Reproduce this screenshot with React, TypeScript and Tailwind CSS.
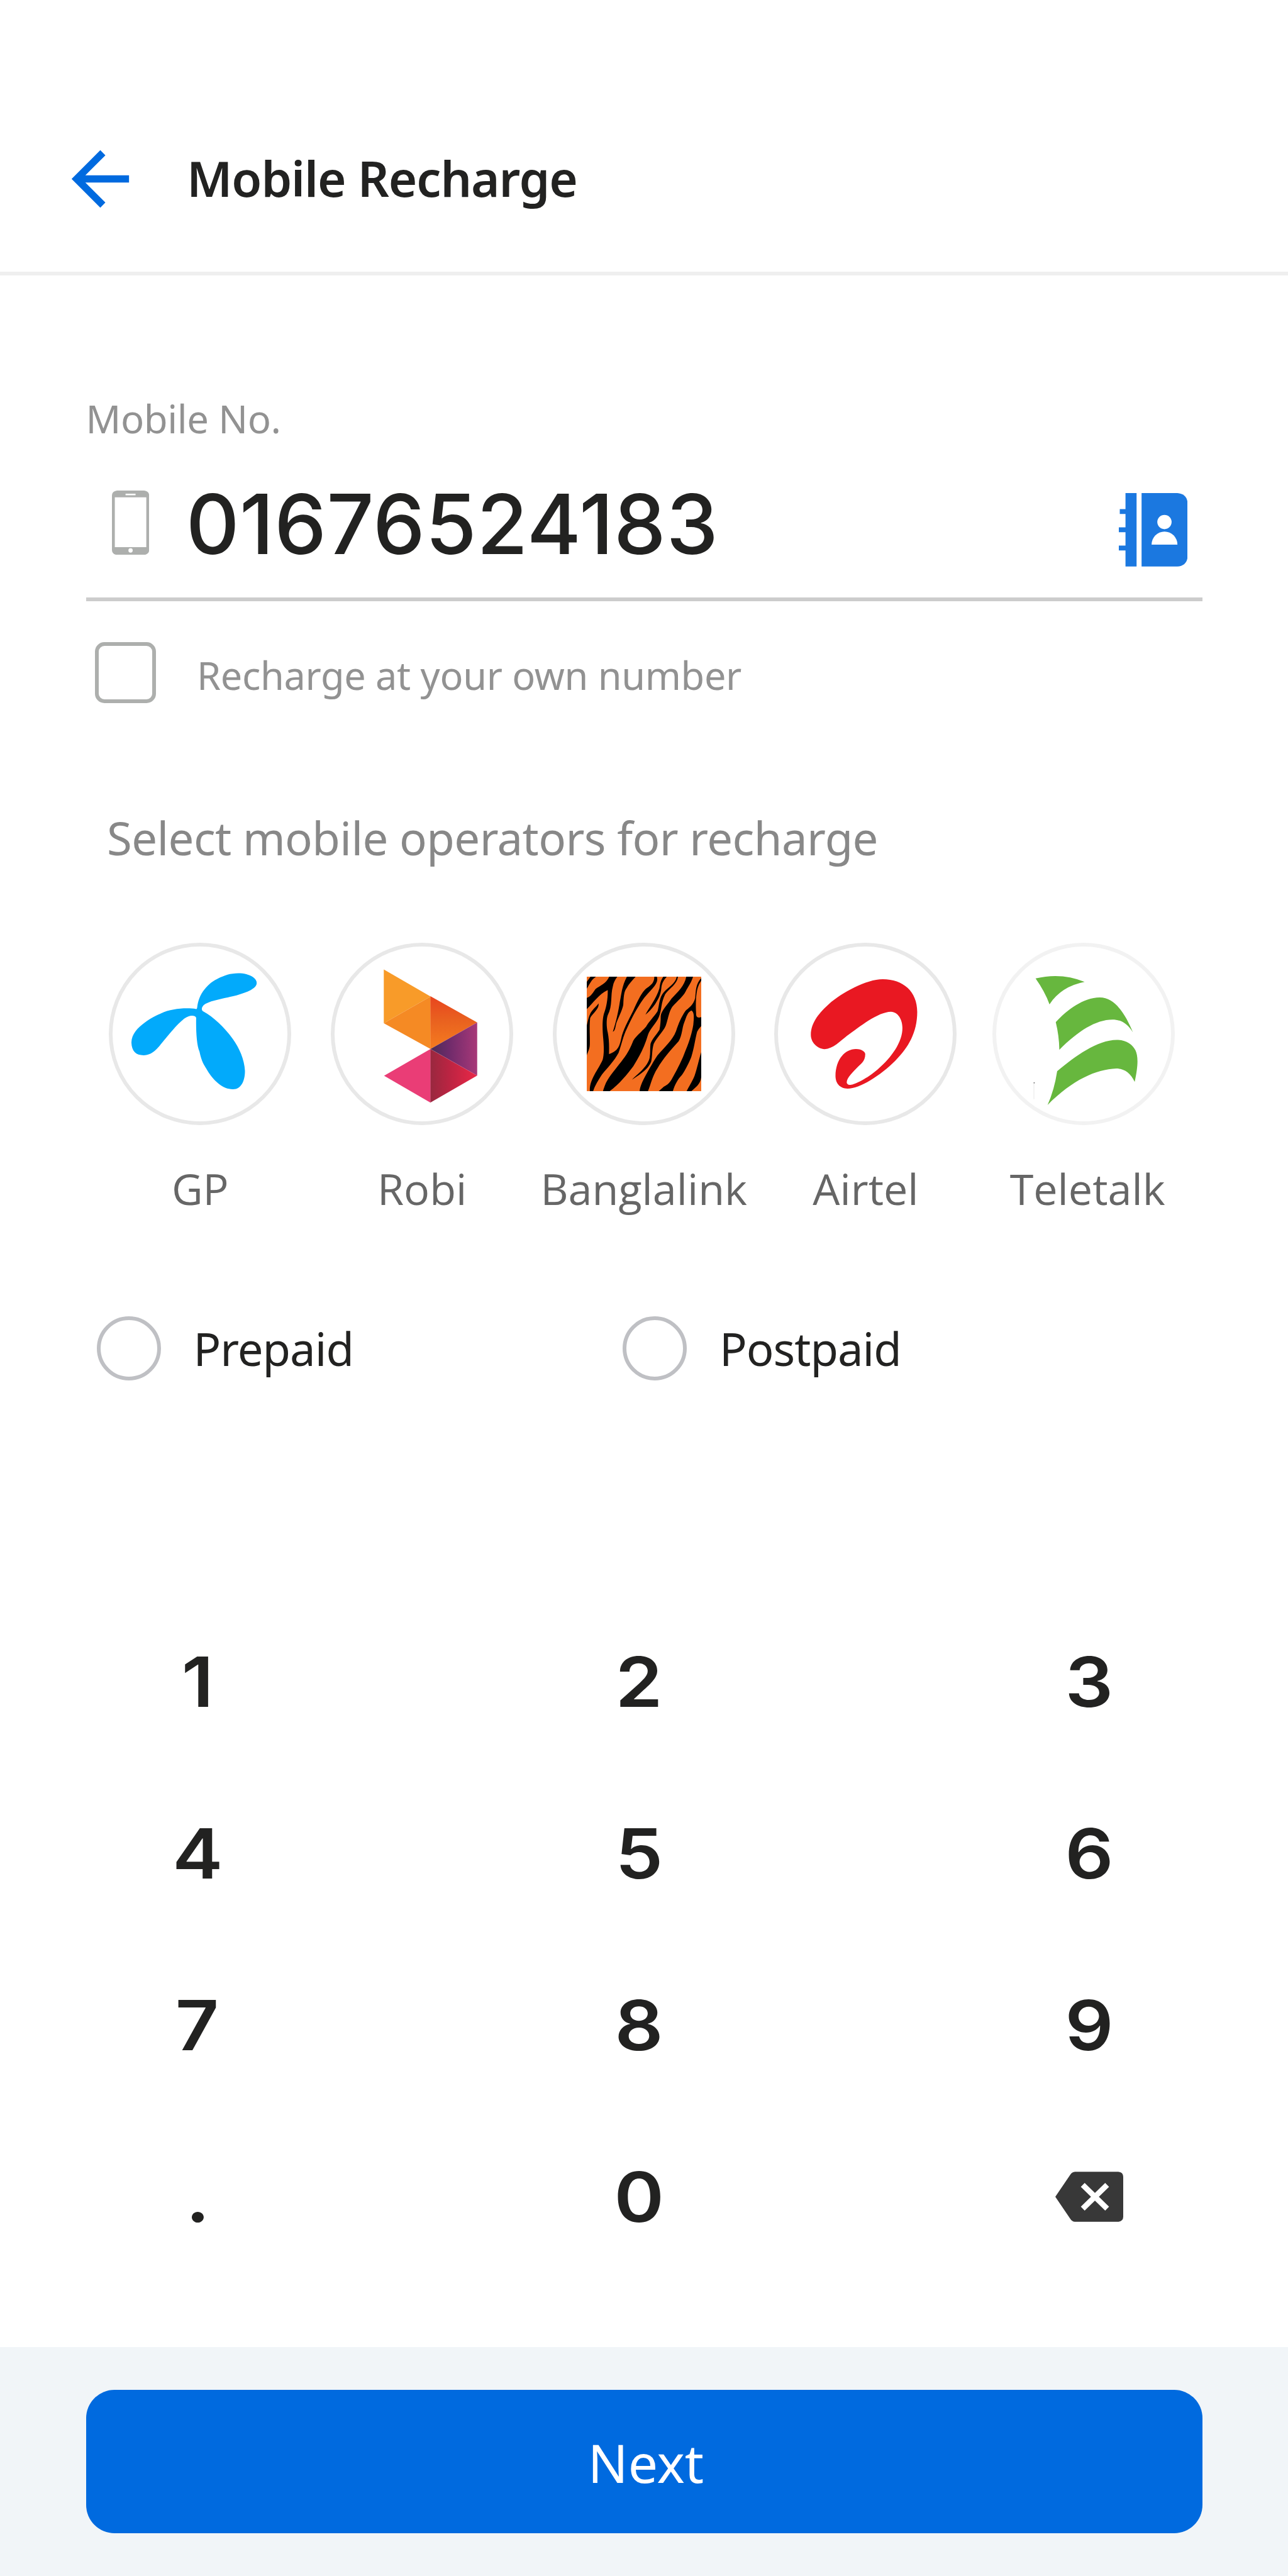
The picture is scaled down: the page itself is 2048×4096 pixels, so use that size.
import React from 'react';

const GpLogo = () => (
  <svg viewBox="70 98 1428 1428" className="h-full w-full">
    <path
      fill="#02aafb"
      d="M755 617C680 605 560 612 480 651C420 675 375 705 345 728C300 762 248 810 247 880C250 950 283 980 345 979C400 975 430 950 480 890C540 820 600 740 660 693C700 662 745 664 754 685C752 790 758 900 780 950C800 1040 815 1050 840 1095C890 1180 965 1245 1040 1245C1105 1248 1137 1180 1136 1100C1132 1010 1090 920 1040 850C970 755 890 680 806 634C790 620 798 585 845 568C880 552 920 545 960 535C1020 520 1060 515 1100 500C1140 488 1175 475 1205 452C1235 432 1238 395 1200 368C1150 330 1060 330 1000 348C940 368 910 385 880 404C850 425 835 445 820 462C785 505 767 555 762 605Q760 618 755 617Z"
    />
  </svg>
);

const RobiLogo = () => (
  <svg viewBox="70 98 1428 1428" className="h-full w-full">
    <defs>
      <linearGradient id="robi-top" x1="0" y1="0" x2="0" y2="1">
        <stop offset="0" stopColor="#e8451f" />
        <stop offset="0.45" stopColor="#e9611f" />
        <stop offset="1" stopColor="#f57c20" />
      </linearGradient>
      <linearGradient id="robi-side" x1="0" y1="0" x2="1" y2="0">
        <stop offset="0" stopColor="#4a2c55" />
        <stop offset="0.4" stopColor="#6f2b6b" />
        <stop offset="1" stopColor="#a83878" />
      </linearGradient>
      <linearGradient id="robi-base" x1="0" y1="0" x2="1" y2="0">
        <stop offset="0" stopColor="#98283f" />
        <stop offset="0.4" stopColor="#bb2442" />
        <stop offset="1" stopColor="#ea2747" />
      </linearGradient>
    </defs>
    <path fill="#f89b29" d="M485 307L851 519L485 728Z" />
    <path fill="#f58a24" d="M485 728L851 519V930Z" />
    <path fill="url(#robi-top)" d="M850 517L1216 722L850 930Z" />
    <path fill="url(#robi-side)" d="M850 930L1216 722V1138Z" />
    <path fill="url(#robi-base)" d="M849 930L1216 1138L849 1350Z" />
    <path fill="#ea3d76" d="M850 930V1350L487 1140Z" />
  </svg>
);

const BanglalinkLogo = () => (
  <svg viewBox="70 98 1428 1428" className="h-full w-full">
    <rect x="336" y="364" width="896" height="896" fill="#f36e20" />
    <g fill="#000">
      <path d="M365 364L408 364C375 385 365 410 336 458L336 405Z" />
      <path d="M512 364C490 415 440 435 405 460C385 485 375 515 336 530L336 618C390 565 430 500 500 468C502 530 490 600 475 640C455 690 458 780 465 850C472 930 470 980 460 1015C425 1095 355 1170 360 1260L386 1260C400 1215 430 1170 455 1130C500 1075 550 1025 585 960C610 890 620 830 650 770C690 680 740 590 785 530C825 480 888 430 888 385L885 364L865 364C865 410 840 430 810 450C770 475 730 560 700 630C660 710 620 780 605 850C590 920 575 945 510 970C512 900 510 850 500 800C490 760 488 700 500 665C540 590 520 510 540 440C545 410 560 385 575 364Z" />
      <path d="M650 364C610 440 608 500 595 560C585 630 565 720 540 795C560 790 560 750 570 720C590 670 620 610 622 580C625 530 625 480 650 450C670 415 700 385 718 364Z" />
      <path d="M428 573C410 600 380 620 365 650C350 680 345 710 336 745L336 980C345 950 360 930 360 890C362 830 355 770 362 690C375 655 435 620 428 573Z" />
      <path d="M935 364C910 400 910 430 905 455C880 540 820 610 795 662C820 640 850 610 870 580C895 540 915 510 920 450C925 410 940 390 962 364Z" />
      <path d="M1040 364C1030 420 980 440 940 485C900 530 905 590 890 635C860 680 820 720 800 755C760 800 720 830 700 865C680 915 660 960 620 1010C580 1065 530 1120 500 1170C485 1195 475 1220 463 1260L515 1260C590 1205 650 1130 700 1065C750 985 790 910 815 820C830 770 880 730 900 680C925 620 915 570 950 500C985 455 1045 420 1050 364Z" />
      <path d="M1115 364C1100 440 1050 480 1000 535C970 580 920 630 915 670C915 710 912 745 905 780C880 820 845 855 835 890C830 930 835 960 828 1000C810 1070 740 1120 690 1170C740 1135 810 1100 840 1030C850 990 845 940 860 890C890 830 950 780 960 730C975 680 980 640 1005 600C1050 550 1090 520 1110 480C1130 440 1155 410 1168 364Z" />
      <path d="M1232 375C1190 420 1190 470 1185 530C1170 590 1130 610 1110 630C1075 680 1055 730 1035 790C1010 860 940 920 890 980C850 1040 800 1130 770 1190C760 1215 750 1240 750 1260L815 1260C840 1200 850 1140 890 1080C930 1010 1000 930 1055 870C1085 820 1080 770 1100 720C1115 680 1125 640 1155 628C1180 640 1175 690 1170 740C1160 800 1140 870 1110 940C1085 1010 1050 1080 1010 1150C980 1210 960 1210 940 1225L900 1260L1010 1260C1025 1210 1050 1165 1080 1135C1110 1090 1140 1030 1155 990C1175 930 1185 850 1200 795Q1212 770 1232 750L1232 680C1205 690 1190 680 1192 650C1188 580 1190 500 1205 450Q1215 420 1232 395Z" />
      <path d="M1232 955C1215 1010 1200 1080 1180 1140C1160 1190 1135 1225 1118 1260L1155 1260C1185 1230 1225 1210 1232 1150Z" />
    </g>
  </svg>
);

const AirtelLogo = () => (
  <svg viewBox="70 98 1428 1428" className="h-full w-full">
    <path
      fill="#e91822"
      d="M920 384C1080 384 1190 480 1190 640C1190 800 1120 920 1020 1020C900 1140 740 1240 645 1240C580 1240 550 1195 550 1140C552 1010 625 930 710 930C760 930 783 955 783 970C783 1030 745 1050 720 1075C690 1108 640 1150 638 1190C638 1200 645 1212 668 1211C700 1208 800 1160 880 1090C990 995 1075 875 1074 765C1074 700 1040 640 985 638C880 640 740 755 640 827C590 866 530 930 465 931C410 931 357 880 357 820C357 720 430 640 500 577C600 490 790 384 920 384Z"
    />
  </svg>
);

const TeletalkLogo = () => (
  <svg viewBox="70 98 1428 1428" className="h-full w-full">
    <g fill="#67b73e">
      <path d="M408 378Q610 330 792 405Q610 440 517 580Q480 480 408 378Z" />
      <path d="M566 720C660 620 780 530 910 527C1040 527 1120 680 1170 800C1130 735 1080 700 1010 700C880 700 740 790 594 936Q592 825 566 720Z" />
      <path d="M577 1104C720 985 890 860 1045 859C1120 860 1165 895 1190 940C1210 985 1214 1050 1184 1188C1150 1110 1095 1083 1040 1083C880 1090 700 1170 502 1368Q555 1250 577 1104Z" />
    </g>
    <rect x="392" y="1200" width="6" height="122" fill="#ececec" />
    <circle cx="397" cy="1195" r="5" fill="#777" />
  </svg>
);

const operators = [
  { name: 'GP', logo: <GpLogo />, ring: 'border-[#e8e8e8]' },
  { name: 'Robi', logo: <RobiLogo />, ring: 'border-[#e8e8e8]' },
  { name: 'Banglalink', logo: <BanglalinkLogo />, ring: 'border-[#e8e8e8]' },
  { name: 'Airtel', logo: <AirtelLogo />, ring: 'border-[#e8e8e8]' },
  { name: 'Teletalk', logo: <TeletalkLogo />, ring: 'border-[#f2f2f2] mr-[12px]' },
];

const keys = ['1', '2', '3', '4', '5', '6', '7', '8', '9', '.', '0', 'back'];

const BackspaceIcon = () => (
  <svg viewBox="211 210 569 420" className="h-[80px] w-[108px]">
    <path
      fill="#383838"
      d="M375 210H737Q780 213 780 253V587Q780 626 737 630H375Q352 628 338 607L211 420L338 233Q352 212 375 210Z"
    />
    <path stroke="#fff" strokeWidth="46" d="M441 320L645 520M645 320L441 520" />
  </svg>
);

const App: React.FC = () => {
  return (
    <div className="flex h-[4096px] w-[2048px] flex-col overflow-hidden bg-white font-['Noto_Sans',sans-serif] text-[#222221]">
      <header className="flex h-[438px] items-start border-b-[6px] border-[#efefef] pt-[216px] pl-[91px]">
        <svg viewBox="0 0 24 24" className="h-[137px] w-[137px]">
          <path fill="#006adf" d="M20 11H7.83l5.59-5.59L12 4l-8 8 8 8 1.41-1.41L7.83 13H20v-2z" />
        </svg>
        <h1 className="-mt-px ml-[69px] text-[78px] leading-[136px] font-semibold tracking-[-1.1px]">Mobile Recharge</h1>
      </header>

      <main className="px-[136.5px] pt-[187px]">
        <label className="block text-[61.6px] leading-[80px] tracking-[-0.4px] text-[#929292]">Mobile No.</label>
        <div className="flex h-[251px] items-start border-b-[6px] border-[#ccc] pl-[41px]">
          <svg viewBox="0 0 104 180" className="mt-[74.5px] h-[102.4px] w-[59.2px]">
            <path
              fill="#adafad"
              fillRule="evenodd"
              d="M14 0H90Q104 2 104 14V166Q104 178 90 180H14Q0 178 0 166V14Q0 2 14 0ZM8 19V158H96V19ZM38 9V13H66V9ZM52 161.500A6 6 0 1 0 52 173.500A6 6 0 1 0 52 161.500Z"
            />
          </svg>
          <span className="mt-[63px] ml-[59px] font-['Inter',sans-serif] text-[131.5px] leading-[132px] font-medium tracking-[0.5px]">
            01676524183
          </span>
          <svg viewBox="139 112 578 616" className="mt-[79px] mr-[23.5px] ml-auto h-[116.8px] w-[109.5px]">
            <g fill="#1b78e0">
              <path d="M195 112H288V728H195V594H139V553H195V440H139V400H195V287H147V246H195Z" />
              <path d="M330 112H630Q712 118 717 200V640Q712 722 630 728H330Z" />
            </g>
            <circle cx="522" cy="355" r="60" fill="#fff" />
            <path fill="#fff" d="M414 545A108 110 0 0 1 631 545Z" />
          </svg>
        </div>

        <div className="mt-[65px] flex h-[97px] items-start pl-[14.5px]">
          <div className="h-[97px] w-[97px] rounded-[15px] border-[6px] border-[#adafad]" />
          <span className="mt-[4px] ml-[65px] text-[61.2px] leading-[97px] tracking-[-0.3px] text-[#929292]">
            Recharge at your own number
          </span>
        </div>

        <p className="mt-[169px] pl-[33.5px] text-[72.5px] leading-[90px] tracking-[-0.6px] text-[#888]">
          Select mobile operators for recharge
        </p>
      </main>

      <div className="mt-[122px] ml-[142px] grid w-[1763.5px] grid-cols-5">
        {operators.map((op) => (
          <div key={op.name} className="flex flex-col items-center">
            <div className={`relative h-[290px] w-[290px] rounded-full border-[6px] ${op.ring}`}>
              <div className="absolute -inset-[6px]">{op.logo}</div>
            </div>
            <span className="mt-[61px] font-['Open_Sans',sans-serif] text-[68.3px] leading-[80px] text-[#666]">{op.name}</span>
          </div>
        ))}
      </div>

      <div className="mt-[163px] flex pl-[153.500px] text-[72.4px] leading-[102px] tracking-[-1px]">
        <div className="flex w-[836.5px] gap-[52px]">
          <div className="h-[102px] w-[102px] rounded-full border-[6px] border-[#bfc0c4]" />
          <span>Prepaid</span>
        </div>
        <div className="flex gap-[52px]">
          <div className="h-[102px] w-[102px] rounded-full border-[6px] border-[#bfc0c4]" />
          <span>Postpaid</span>
        </div>
      </div>

      <div className="mt-[342px] grid auto-rows-[273px] grid-cols-[628px_777px_654px] items-center justify-items-center font-['Inter',sans-serif] text-[109.5px] font-semibold">
        {keys.map((k) => (k === 'back' ? <BackspaceIcon key={k} /> : <span key={k} className="scale-x-110 leading-[140px]">{k}</span>))}
      </div>

      <footer className="mt-auto h-[364px] bg-[#f1f5f8] px-[136.5px] pt-[68px]">
        <button className="h-[228px] w-full rounded-[45px] bg-[#006adf] pt-[3px] pl-[6px] text-[84px] leading-[100px] text-white">Next</button>
      </footer>
    </div>
  );
};

export default App;
